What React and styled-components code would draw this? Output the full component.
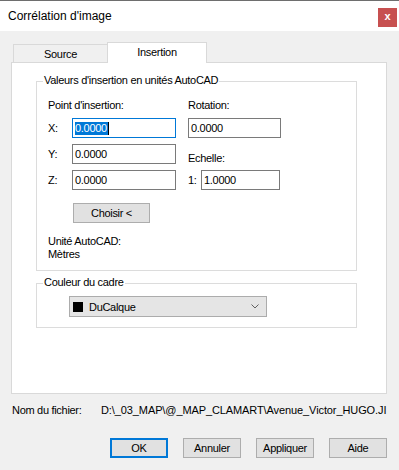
import React from 'react';
import styled, { createGlobalStyle } from 'styled-components';

const GlobalStyle = createGlobalStyle`
  html, body {
    margin: 0;
    padding: 0;
    background: #f0f0f0;
  }
  body {
    font-family: "Liberation Sans", Arial, sans-serif;
    font-size: 11px;
    color: #000;
  }
  * {
    box-sizing: border-box;
  }
`;

const Window = styled.div`
  width: 399px;
  height: 470px;
  display: flex;
  flex-direction: column;
  border-top: 1px solid #6e6e6e;
  overflow: hidden;
`;

const TitleBar = styled.div`
  height: 30px;
  background: #ffffff;
  display: flex;
  align-items: center;
  justify-content: space-between;
  padding: 0 2px 0 8px;
  font-size: 12px;
`;

const CloseButton = styled.div`
  width: 19px;
  height: 19px;
  align-self: flex-start;
  margin-top: 7px;
  background: #c75050;
  color: #fff;
  font-weight: bold;
  font-size: 11px;
  display: flex;
  align-items: center;
  justify-content: center;
  line-height: 1;
  padding-bottom: 2px;
`;

const Body = styled.div`
  flex: 1;
  display: flex;
  flex-direction: column;
  padding: 11px 12px 12px 11px;
  letter-spacing: -0.3px;
`;

const TabStrip = styled.div`
  display: flex;
  align-items: flex-end;
  height: 20px;
  padding-left: 2px;
`;

const Tab = styled.div`
  width: ${(p) => (p.$active ? '100px' : '94px')};
  height: ${(p) => (p.$active ? '21px' : '18px')};
  margin-bottom: ${(p) => (p.$active ? '-1px' : '0')};
  border: 1px solid #d9d9d9;
  border-bottom: none;
  border-right: ${(p) => (p.$active ? '1px solid #d9d9d9' : 'none')};
  background: ${(p) => (p.$active ? '#ffffff' : '#f0f0f0')};
  position: relative;
  z-index: ${(p) => (p.$active ? 1 : 0)};
  display: flex;
  align-items: center;
  justify-content: center;
  padding-bottom: ${(p) => (p.$active ? '2px' : '0')};
`;

const Panel = styled.div`
  height: 332px;
  border: 1px solid #d9d9d9;
  background: #ffffff;
  padding: 18px 0 0 24px;
  display: flex;
  flex-direction: column;
  gap: 12px;
`;

const Group = styled.div`
  position: relative;
  width: 321px;
  height: ${(p) => p.$height}px;
  border: 1px solid #dcdcdc;
  padding: ${(p) => p.$pad};
  display: flex;
`;

const Legend = styled.span`
  position: absolute;
  top: -8px;
  left: 6px;
  padding: 0 1px;
  background: #ffffff;
  line-height: 13px;
`;

const Column = styled.div`
  display: flex;
  flex-direction: column;
  width: ${(p) => p.$width || 'auto'};
`;

const Label = styled.div`
  line-height: 13px;
  margin-top: ${(p) => p.$top || 0}px;
  margin-bottom: ${(p) => p.$bottom || 0}px;
`;

const FieldRow = styled.div`
  display: flex;
  align-items: center;
  height: 20px;
  margin-bottom: ${(p) => p.$bottom || 0}px;
`;

const RowLabel = styled.span`
  width: ${(p) => p.$width}px;
`;

const TextBox = styled.div`
  width: ${(p) => p.$width}px;
  height: 20px;
  border: 1px solid ${(p) => (p.$focused ? '#0078d7' : '#7a7a7a')};
  background: #ffffff;
  padding-left: 2px;
  display: flex;
  align-items: center;
  line-height: 13px;
`;

const Selection = styled.span`
  background: #0078d7;
  color: #ffffff;
  padding-right: 1px;
  border-right: 1px solid #000;
`;

const Button = styled.div`
  width: ${(p) => p.$width || 58}px;
  height: 20px;
  background: #e1e1e1;
  border: ${(p) => (p.$default ? '2px solid #0078d7' : '1px solid #adadad')};
  display: flex;
  align-items: center;
  justify-content: center;
  margin-left: ${(p) => p.$left || 0}px;
  margin-top: ${(p) => p.$top || 0}px;
`;

const Select = styled.div`
  width: 198px;
  height: 21px;
  background: #e5e5e5;
  border: 1px solid #acacac;
  display: flex;
  align-items: center;
  padding: 0 7px 0 3px;
`;

const Swatch = styled.span`
  width: 10px;
  height: 10px;
  background: #000;
  margin-right: 6px;
`;

const SelectText = styled.span`
  flex: 1;
`;

const FileRow = styled.div`
  display: flex;
  line-height: 13px;
  margin-top: 10px;
  padding-left: 1px;
`;

const FileLabel = styled.span`
  width: 89px;
  flex-shrink: 0;
`;

const FilePath = styled.span`
  white-space: nowrap;
  letter-spacing: -0.1px;
`;

const ButtonBar = styled.div`
  display: flex;
  justify-content: flex-end;
  gap: 15px;
  margin-top: 21px;
`;

const Chevron = () => (
  <svg width="8" height="5" viewBox="0 0 8 5">
    <path d="M0.5 0.5 L4 4 L7.5 0.5" fill="none" stroke="#606060" strokeWidth="1" />
  </svg>
);

export default function App() {
  return (
    <>
      <GlobalStyle />
      <Window>
        <TitleBar>
          <span>Corrélation d'image</span>
          <CloseButton>x</CloseButton>
        </TitleBar>
        <Body>
          <TabStrip>
            <Tab>Source</Tab>
            <Tab $active>Insertion</Tab>
          </TabStrip>
          <Panel>
            <Group $height={190} $pad="17px 0 0 11px">
              <Legend>Valeurs d'insertion en unités AutoCAD</Legend>
              <Column $width="140px">
                <Label $bottom={6}>Point d'insertion:</Label>
                <FieldRow $bottom={6}>
                  <RowLabel $width={24}>X:</RowLabel>
                  <TextBox $width={104} $focused>
                    <Selection>0.0000</Selection>
                  </TextBox>
                </FieldRow>
                <FieldRow $bottom={6}>
                  <RowLabel $width={24}>Y:</RowLabel>
                  <TextBox $width={104}>0.0000</TextBox>
                </FieldRow>
                <FieldRow>
                  <RowLabel $width={24}>Z:</RowLabel>
                  <TextBox $width={104}>0.0000</TextBox>
                </FieldRow>
                <Button $width={77} $left={25} $top={13}>Choisir &lt;</Button>
                <Label $top={12}>Unité AutoCAD:</Label>
                <Label>Mètres</Label>
              </Column>
              <Column>
                <Label $bottom={6}>Rotation:</Label>
                <TextBox $width={93}>0.0000</TextBox>
                <Label $top={14} $bottom={5}>Echelle:</Label>
                <FieldRow>
                  <RowLabel $width={13}>1:</RowLabel>
                  <TextBox $width={79}>1.0000</TextBox>
                </FieldRow>
              </Column>
            </Group>
            <Group $height={45} $pad="12px 0 0 32px">
              <Legend>Couleur du cadre</Legend>
              <Select>
                <Swatch />
                <SelectText>DuCalque</SelectText>
                <Chevron />
              </Select>
            </Group>
          </Panel>
          <FileRow>
            <FileLabel>Nom du fichier:</FileLabel>
            <FilePath>D:\_03_MAP\@_MAP_CLAMART\Avenue_Victor_HUGO.JI</FilePath>
          </FileRow>
          <ButtonBar>
            <Button $default>OK</Button>
            <Button>Annuler</Button>
            <Button>Appliquer</Button>
            <Button>Aide</Button>
          </ButtonBar>
        </Body>
      </Window>
    </>
  );
}
